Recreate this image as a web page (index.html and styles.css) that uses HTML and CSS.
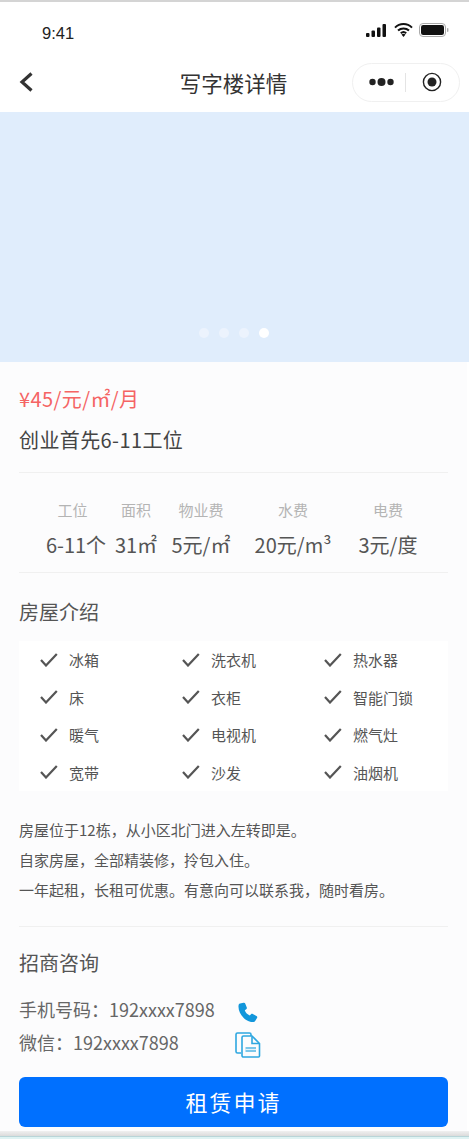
FILE: index.html
```html
<!DOCTYPE html>
<html lang="zh-CN">
<head>
  <meta charset="UTF-8">
  <title>写字楼详情</title>
  <link rel="stylesheet" href="styles.css">
</head>
<body>
  <div class="phone">
    <div class="status-bar">
      <span class="time">9:41</span>
      <div class="status-icons">
        <svg width="22" height="13" viewBox="0 0 22 13"><rect x="0" y="9" width="3.5" height="4" rx="1"/><rect x="5.5" y="6.5" width="3.5" height="6.5" rx="1"/><rect x="11" y="3.5" width="3.5" height="9.5" rx="1"/><rect x="16.5" y="0" width="3.5" height="13" rx="1"/></svg>
        <svg width="19" height="14" viewBox="0 0 19 14"><path d="M1 4.6a12 12 0 0 1 17 0M4 7.6a8 8 0 0 1 11 0M6.8 10.2a4 4 0 0 1 5.4 0" fill="none" stroke="#111" stroke-width="2"/><path d="M9.5 14l-2-2.4a3 3 0 0 1 4 0z"/></svg>
        <svg width="30" height="14" viewBox="0 0 30 14"><rect x="0.5" y="0.5" width="26" height="13" rx="3.5" fill="none" stroke="#aaa"/><rect x="2" y="2" width="23" height="10" rx="2.2"/><rect x="28" y="5" width="1.4" height="4" rx=".7" fill="#aaa"/></svg>
      </div>
    </div>
    <div class="nav-bar">
      <svg class="back" width="16" height="24" viewBox="0 0 16 24"><path d="M13.5 3.5L4 12l9.5 8.5" fill="none" stroke="#333" stroke-width="3.2"/></svg>
      <h1 class="nav-title">写字楼详情</h1>
      <div class="capsule">
        <svg width="25" height="10" viewBox="0 0 25 10"><circle cx="3.5" cy="5" r="3.2"/><circle cx="12.5" cy="5" r="4"/><circle cx="21.5" cy="5" r="3.2"/></svg>
        <span class="capsule-line"></span>
        <svg width="20" height="20" viewBox="0 0 20 20"><circle cx="10" cy="10" r="8.6" fill="none" stroke="#222" stroke-width="1.4"/><circle cx="10" cy="10" r="4.5"/></svg>
      </div>
    </div>

    <div class="banner">
      <div class="dots">
        <span class="dot"></span><span class="dot"></span><span class="dot"></span><span class="dot active"></span>
      </div>
    </div>

    <div class="content">
      <div class="price">¥45/元/㎡/月</div>
      <div class="name">创业首先6-11工位</div>

      <div class="specs">
        <div class="spec spec-a"><span class="spec-label">工位</span><span class="spec-value">6-11个</span></div>
        <div class="spec spec-b"><span class="spec-label">面积</span><span class="spec-value">31㎡</span></div>
        <div class="spec spec-c"><span class="spec-label">物业费</span><span class="spec-value">5元/㎡</span></div>
        <div class="spec spec-d"><span class="spec-label">水费</span><span class="spec-value">20元/m³</span></div>
        <div class="spec spec-e"><span class="spec-label">电费</span><span class="spec-value">3元/度</span></div>
      </div>

      <h2 class="section-title">房屋介绍</h2>
      <ul class="facilities">
        <li><svg class="check" viewBox="0 0 18 14"><path d="M1 7l5 5.5L16.8 1"/></svg>冰箱</li>
        <li><svg class="check" viewBox="0 0 18 14"><path d="M1 7l5 5.5L16.8 1"/></svg>洗衣机</li>
        <li><svg class="check" viewBox="0 0 18 14"><path d="M1 7l5 5.5L16.8 1"/></svg>热水器</li>
        <li><svg class="check" viewBox="0 0 18 14"><path d="M1 7l5 5.5L16.8 1"/></svg>床</li>
        <li><svg class="check" viewBox="0 0 18 14"><path d="M1 7l5 5.5L16.8 1"/></svg>衣柜</li>
        <li><svg class="check" viewBox="0 0 18 14"><path d="M1 7l5 5.5L16.8 1"/></svg>智能门锁</li>
        <li><svg class="check" viewBox="0 0 18 14"><path d="M1 7l5 5.5L16.8 1"/></svg>暖气</li>
        <li><svg class="check" viewBox="0 0 18 14"><path d="M1 7l5 5.5L16.8 1"/></svg>电视机</li>
        <li><svg class="check" viewBox="0 0 18 14"><path d="M1 7l5 5.5L16.8 1"/></svg>燃气灶</li>
        <li><svg class="check" viewBox="0 0 18 14"><path d="M1 7l5 5.5L16.8 1"/></svg>宽带</li>
        <li><svg class="check" viewBox="0 0 18 14"><path d="M1 7l5 5.5L16.8 1"/></svg>沙发</li>
        <li><svg class="check" viewBox="0 0 18 14"><path d="M1 7l5 5.5L16.8 1"/></svg>油烟机</li>
      </ul>

      <div class="desc">
        <p>房屋位于12栋，从小区北门进入左转即是。</p>
        <p>自家房屋，全部精装修，拎包入住。</p>
        <p>一年起租，长租可优惠。有意向可以联系我，随时看房。</p>
      </div>

      <h2 class="section-title contact-title">招商咨询</h2>
      <div class="contact-row">
        <span class="contact-text">手机号码：192xxxx7898</span>
        <svg class="icon-phone" width="22" height="22" viewBox="0 0 22 22"><path d="M3 1.5L6.5.8C7.5.6 8 1 8.3 1.8L9.8 5.5C10 6.2 9.8 6.8 9.2 7.2L7.8 8.2C8.5 10.5 10.5 12.5 12.8 13.5L14 12.3C14.6 11.7 15.2 11.7 15.8 12L19.5 14C20.3 14.5 20.5 15.2 20 16L18.5 18.5C18 19.5 17 20 15.5 20C8 20 1 11 1.5 4C1.6 2.700 2 1.800 3 1.500Z" fill="#1296db"/></svg>
      </div>
      <div class="contact-row">
        <span class="contact-text">微信：192xxxx7898</span>
        <svg class="icon-copy" width="26" height="26" viewBox="0 0 26 26" fill="none" stroke="#2ea7e0" stroke-width="1.6"><path d="M6 21H2.5A1.5 1.5 0 0 1 1 19.5V2.5A1.5 1.5 0 0 1 2.5 1h12A1.5 1.5 0 0 1 16 2.5V4"/><path d="M7 5.5A1.5 1.5 0 0 1 8.5 4H17l7.500 7.500V24a1 1 0 0 1-1 1H8.500A1.500 1.500 0 0 1 7 23.500z"/><path d="M17 4.500V11.500H24"/><rect x="10.500" y="15" width="10.500" height="5" fill="#7cc7ea" stroke="none"/><path d="M10.500 17.500h10.500" stroke="#fff" stroke-width=".8"/></svg>
      </div>

      <button class="apply-btn" type="button">租赁申请</button>
    </div>
    <div class="page-foot"></div>
  </div>
</body>
</html>
```

FILE: styles.css
```css
html, body {
  margin: 0;
  padding: 0;
}
body {
  font-family: "Noto Sans CJK SC", "Open Sans", sans-serif;
  background: #fff;
  width: 469px;
  height: 1139px;
  overflow: hidden;
}
.phone {
  display: flex;
  flex-direction: column;
  height: 1139px;
  border-top: 2px solid #d4d4d4;
  box-sizing: border-box;
}
.status-bar {
  height: 50px;
  display: flex;
  justify-content: space-between;
  align-items: center;
  padding: 0 20px 0 42px;
  flex-shrink: 0;
}
.time {
  font-family: "Liberation Sans", sans-serif;
  font-size: 16.5px;
  color: #222;
  margin-top: 12px;
}
.status-icons {
  display: flex;
  align-items: center;
  gap: 6px;
  margin-top: 6px;
}
.status-icons svg {
  fill: #111;
  display: block;
}
.nav-bar {
  height: 60px;
  display: flex;
  align-items: center;
  justify-content: space-between;
  padding: 0 9px 0 18px;
  position: relative;
  flex-shrink: 0;
}
.nav-title {
  position: absolute;
  left: 0;
  right: 2px;
  margin: 0;
  text-align: center;
  font-size: 21.5px;
  font-weight: 400;
  color: #333;
}
.capsule {
  width: 108px;
  height: 39px;
  border: 1px solid #f0f0f0;
  border-radius: 20px;
  display: flex;
  align-items: center;
  padding-left: 16px;
  box-sizing: border-box;
}
.capsule svg {
  fill: #222;
}
.capsule-line {
  width: 1px;
  height: 19px;
  background: #e4e4e4;
  margin: 0 16px 0 11px;
}
.banner {
  height: 250px;
  background: #e0edfc;
  display: flex;
  align-items: flex-end;
  justify-content: center;
  padding-right: 1px;
  flex-shrink: 0;
}
.dots {
  display: flex;
  gap: 10px;
  padding-bottom: 24px;
}
.dot {
  width: 10px;
  height: 10px;
  border-radius: 50%;
  background: #ecf3fd;
}
.dot.active {
  background: #fff;
}
.content {
  flex: 1;
  background: #fcfcfd;
  padding: 0 19px;
  margin-right: 2px;
}
.price {
  font-size: 20px;
  letter-spacing: .4px;
  color: #f56464;
  margin-top: 23px;
  line-height: 28px;
}
.name {
  font-size: 20px;
  letter-spacing: .4px;
  color: #444;
  margin-top: 13px;
  line-height: 28px;
  padding-bottom: 18px;
  border-bottom: 1px solid #f0f0f0;
}
.specs {
  display: flex;
  padding: 25px 0 0;
  height: 74px;
  border-bottom: 1px solid #f0f0f0;
}
.spec {
  display: flex;
  flex-direction: column;
  align-items: center;
}
.spec-a { width: 56px; margin-left: 29px; }
.spec-b { width: 42px; margin-left: 11px; }
.spec-c { width: 60px; margin-left: 14px; }
.spec-d { width: 78px; margin-left: 23px; }
.spec-e { width: 60px; margin-left: 26px; }
.spec-a .spec-label {
  margin-right: 7px;
}
.spec-label {
  font-size: 15px;
  color: #b4b4b4;
  line-height: 24px;
  white-space: nowrap;
}
.spec-value {
  font-size: 20px;
  color: #555;
  line-height: 28px;
  margin-top: 9px;
  white-space: nowrap;
}
.section-title {
  font-size: 20px;
  font-weight: 400;
  color: #555;
  margin: 25px 0 15px;
  line-height: 28px;
}
.facilities {
  list-style: none;
  margin: 0;
  padding: 0;
  background: #fff;
  height: 150px;
  display: grid;
  grid-template-columns: repeat(3, 142px);
  grid-auto-rows: 37.5px;
}
.facilities li {
  display: flex;
  align-items: center;
  font-size: 15px;
  color: #555;
  padding-left: 21px;
}
.check {
  width: 18px;
  height: 14px;
  margin-right: 11px;
  fill: none;
  stroke: #555;
  stroke-width: 2.2;
  flex-shrink: 0;
}
.desc {
  margin-top: 24px;
  padding-bottom: 21px;
  border-bottom: 1px solid #f0f0f0;
}
.desc p {
  margin: 0;
  font-size: 15px;
  line-height: 30px;
  color: #555;
}
.contact-title {
  margin: 22px 0 16px;
}
.contact-row {
  display: flex;
  align-items: center;
  height: 33px;
}
.contact-text {
  font-size: 18px;
  color: #666;
  width: 216px;
  white-space: nowrap;
  margin-bottom: 2px;
}
.icon-phone {
  margin: 6px 0 0 2px;
}
.icon-copy {
  margin-top: 5px;
}
.apply-btn {
  display: block;
  width: 429px;
  height: 50px;
  margin-top: 18px;
  padding-bottom: 4px;
  border: none;
  border-radius: 6px;
  background: #0070ff;
  color: #fff;
  font-family: inherit;
  font-size: 22px;
  letter-spacing: 2px;
}
.page-foot {
  height: 8px;
  flex-shrink: 0;
  background: linear-gradient(#f0f0f0, #dcdcdc 60%, #b9d5d8 60%, #b9d5d8 75%, #dff3f3 75%);
}
```
